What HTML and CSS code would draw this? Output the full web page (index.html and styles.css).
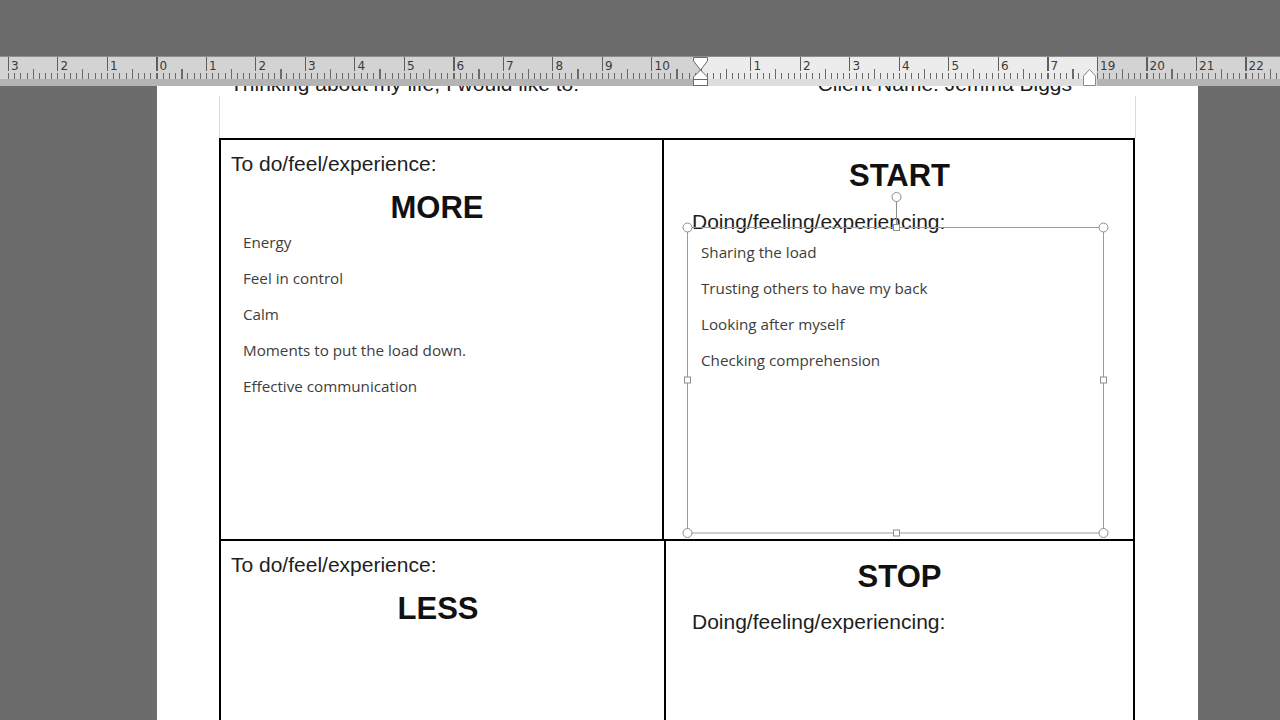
FILE: index.html
```html
<!DOCTYPE html>
<html lang="en">
<head>
<meta charset="utf-8">
<title>More / Less / Start / Stop</title>
<link rel="stylesheet" href="styles.css">
</head>
<body>
<div class="topbar"></div>
<div class="ruler">
  <div class="ruler-nums">
    <span class="cm">3</span><span class="cm">2</span><span class="cm">1</span><span class="cm">0</span>
    <span class="cm">1</span><span class="cm">2</span><span class="cm">3</span><span class="cm">4</span><span class="cm">5</span>
    <span class="cm">6</span><span class="cm">7</span><span class="cm">8</span><span class="cm">9</span><span class="cm">10</span>
    <span class="cm"></span>
    <span class="cm">1</span><span class="cm">2</span><span class="cm">3</span><span class="cm">4</span><span class="cm">5</span><span class="cm">6</span><span class="cm">7</span>
    <span class="cm">19</span><span class="cm">20</span><span class="cm">21</span><span class="cm">22</span>
  </div>
  <svg class="ruler-markers" width="1280" height="30" viewBox="0 56 1280 30" aria-hidden="true">
    <polygon points="693.5,57.5 707.5,57.5 707.5,61 700.5,70 693.5,61" fill="#fff" stroke="#6a6a6a"/>
    <polygon points="700.5,70 707.5,77 707.5,79.5 693.5,79.5 693.5,77" fill="#fff" stroke="#6a6a6a"/>
    <rect x="693.5" y="79.5" width="14" height="6" fill="#fff" stroke="#6a6a6a"/>
    <polygon points="1083.5,85.5 1083.5,76 1089.5,69.5 1095.5,76 1095.5,85.5" fill="#fff" stroke="#8a8a8a"/>
  </svg>
</div>
<div class="workspace">
  <div class="page">
    <div class="doc-head">
      <span>Thinking about my life, I would like to:</span>
      <span>Client Name: Jemma Biggs</span>
    </div>
    <div class="guides"></div>
    <div class="sheet">
      <div class="row row-top">
        <div class="cell cell-left">
          <div class="label">To do/feel/experience:</div>
          <div class="big big-left">MORE</div>
          <ul class="items items-left">
            <li>Energy</li>
            <li>Feel in control</li>
            <li>Calm</li>
            <li>Moments to put the load down.</li>
            <li>Effective communication</li>
          </ul>
        </div>
        <div class="cell cell-right">
          <div class="big">START</div>
          <div class="label label-gap">Doing/feeling/experiencing:</div>
          <ul class="items items-right">
            <li>Sharing the load</li>
            <li>Trusting others to have my back</li>
            <li>Looking after myself</li>
            <li>Checking comprehension</li>
          </ul>
          <svg class="selection" width="432" height="352" viewBox="0 0 432 352" aria-hidden="true">
            <line x1="215.5" y1="11.5" x2="215.5" y2="34.5" stroke="#8c8c8c"/>
            <circle cx="215.5" cy="7" r="4.5" fill="#fff" stroke="#8c8c8c"/>
            <rect x="6.5" y="37.5" width="416" height="305.5" fill="none" stroke="#9c9c9c"/>
            <circle cx="6.5" cy="37.5" r="4.5" fill="#fff" stroke="#8c8c8c"/>
            <circle cx="422.5" cy="37.5" r="4.5" fill="#fff" stroke="#8c8c8c"/>
            <circle cx="6.5" cy="343" r="4.5" fill="#fff" stroke="#8c8c8c"/>
            <circle cx="422.5" cy="343" r="4.5" fill="#fff" stroke="#8c8c8c"/>
            <rect x="212.5" y="34.5" width="6" height="6" fill="#fff" stroke="#8c8c8c"/>
            <rect x="212.5" y="340" width="6" height="6" fill="#fff" stroke="#8c8c8c"/>
            <rect x="3.5" y="187" width="6" height="6" fill="#fff" stroke="#8c8c8c"/>
            <rect x="419.5" y="187" width="6" height="6" fill="#fff" stroke="#8c8c8c"/>
          </svg>
        </div>
      </div>
      <div class="row row-bottom">
        <div class="cell cell-left cell-left-wide">
          <div class="label">To do/feel/experience:</div>
          <div class="big big-left">LESS</div>
        </div>
        <div class="cell cell-right cell-right-narrow">
          <div class="big">STOP</div>
          <div class="label label-gap-b">Doing/feeling/experiencing:</div>
        </div>
      </div>
    </div>
  </div>
</div>
</body>
</html>
```
FILE: styles.css
```css
html, body {
  margin: 0;
  padding: 0;
}
body {
  width: 1280px;
  height: 720px;
  overflow: hidden;
  background: #6c6c6c;
  font-family: "Liberation Sans", Arial, sans-serif;
}
.topbar {
  height: 56px;
  background: #6c6c6c;
}
.ruler {
  position: relative;
  height: 29px;
  border-top: 1px solid #8e8e8e;
  background-color: #d3d3d3;
  background-image:
    repeating-linear-gradient(to right, #5e5e5e 0 1px, transparent 1px 49.5px),
    repeating-linear-gradient(to right, #6a6a6a 0 1px, transparent 1px 49.5px),
    repeating-linear-gradient(to right, #6a6a6a 0 1px, transparent 1px 6.1875px),
    linear-gradient(#a9a9a9, #a9a9a9),
    linear-gradient(#ececec, #ececec),
    linear-gradient(#dedede, #dedede),
    linear-gradient(#b4b4b4, #b4b4b4);
  background-size:
    1280px 14px,
    1280px 10px,
    1280px 6px,
    1px 22px,
    396px 22px,
    396px 7px,
    100% 7px;
  background-position:
    8px 0,
    33px 12px,
    8px 16px,
    1097px 0,
    701px 0,
    701px 22px,
    0 22px;
  background-repeat: no-repeat;
}
.ruler-nums {
  display: flex;
  padding-left: 11px;
  padding-top: 3px;
  font-family: "DejaVu Sans", sans-serif;
  font-size: 12px;
  line-height: 13px;
  color: #3a3a3a;
}
.cm {
  flex: none;
  width: 49.5px;
}
.ruler-markers {
  position: absolute;
  left: 0;
  top: -1px;
}
.workspace {
  height: 634px;
  padding-left: 157px;
  background: #6c6c6c;
}
.page {
  width: 1041px;
  height: 634px;
  background: #fff;
  overflow: hidden;
}
.doc-head {
  display: flex;
  justify-content: space-between;
  margin-top: -14px;
  padding: 0 126px 0 73px;
  font-size: 21px;
  line-height: 24px;
  color: #1a1a1a;
}
.guides {
  height: 42px;
  margin-left: 62px;
  width: 915px;
  border-left: 1px solid #d6dce4;
  border-right: 1px solid #d6dce4;
}
.sheet {
  margin-left: 62px;
  width: 916px;
  box-sizing: border-box;
  border: 2px solid #000;
  border-bottom: none;
}
.row {
  display: flex;
}
.row-top {
  height: 401px;
  box-sizing: border-box;
  border-bottom: 2px solid #000;
}
.row-bottom {
  height: 200px;
}
.cell {
  box-sizing: border-box;
}
.cell-left {
  flex: none;
  width: 443px;
  border-right: 2px solid #000;
  padding: 12px 10px 0 10px;
}
.cell-left-wide {
  width: 445px;
}
.cell-right {
  position: relative;
  flex: 1;
  padding: 20px 26px 0 28px;
}
.cell-right-narrow {
  padding: 20px 26px 0 26px;
}
.label {
  font-size: 21px;
  line-height: 24px;
  color: #1e1e1e;
}
.label-gap {
  margin-top: 18px;
}
.label-gap-b {
  margin-top: 17px;
}
.big {
  font-weight: bold;
  font-size: 31px;
  line-height: 32px;
  text-align: center;
  color: #111;
}
.big-left {
  margin-top: 16px;
  padding-right: 9px;
}
.items {
  list-style: none;
  margin: 0;
  padding: 0;
  font-family: "Open Sans", sans-serif;
  font-size: 15.2px;
  line-height: 36px;
  color: #3d3d3d;
}
.items-left {
  padding-left: 12px;
}
.items-right {
  padding-left: 9px;
}
.selection {
  position: absolute;
  left: 17px;
  top: 50px;
}
```
